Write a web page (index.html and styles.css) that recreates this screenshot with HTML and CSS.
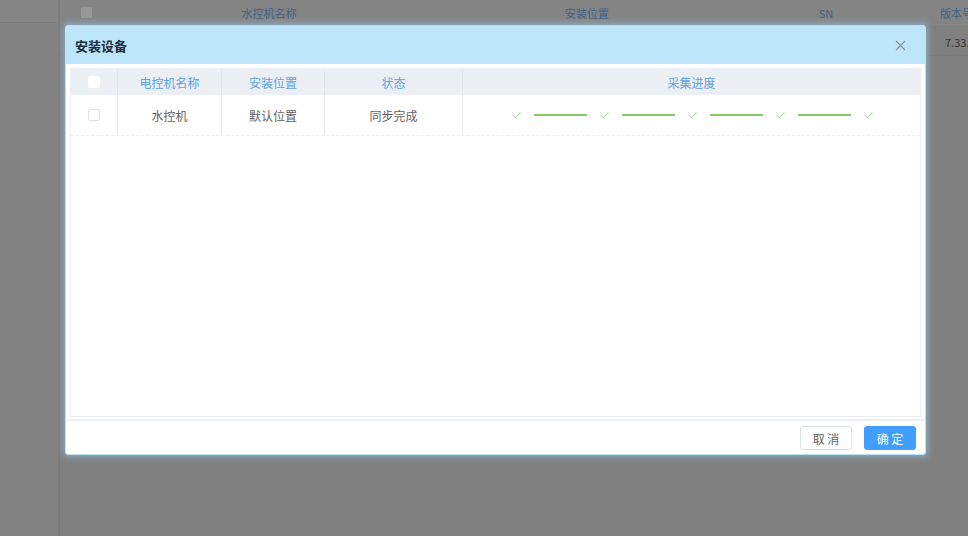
FILE: index.html
```html
<!DOCTYPE html>
<html lang="zh">
<head>
<meta charset="utf-8">
<title>安装设备</title>
<link rel="stylesheet" href="styles.css">
</head>
<body>
<div class="page">
  <aside class="sidebar">
    <div class="side-top"></div>
  </aside>
  <main class="main">
    <div class="bg-grid bg-head">
      <div class="bg-cell"><span class="bg-check"></span></div>
      <div class="bg-cell">水控机名称</div>
      <div class="bg-cell">安装位置</div>
      <div class="bg-cell">SN</div>
      <div class="bg-cell bg-ver">版本号</div>
    </div>
    <div class="bg-grid bg-row">
      <div class="bg-cell"></div>
      <div class="bg-cell"></div>
      <div class="bg-cell"></div>
      <div class="bg-cell"></div>
      <div class="bg-cell bg-ver-val">7.33.0</div>
    </div>
  </main>
</div>

<div class="dialog">
  <div class="dlg-head">
    <span class="dlg-title">安装设备</span>
    <svg class="dlg-close" width="11" height="11" viewBox="0 0 11 11"><path d="M1 1L10 10M10 1L1 10" stroke="#8d9196" stroke-width="1.2" fill="none"/></svg>
  </div>
  <div class="dlg-body">
    <div class="tbl">
      <div class="tgrid thead">
        <div class="tc"><span class="cbox"></span></div>
        <div class="tc">电控机名称</div>
        <div class="tc">安装位置</div>
        <div class="tc">状态</div>
        <div class="tc">采集进度</div>
      </div>
      <div class="tgrid trow">
        <div class="tc"><span class="cbox"></span></div>
        <div class="tc">水控机</div>
        <div class="tc">默认位置</div>
        <div class="tc">同步完成</div>
        <div class="tc">
          <div class="steps">
            <svg class="ck" width="9" height="8" viewBox="0 0 9 8"><path d="M0.5 4L3.3 6.8L8.5 1.2" stroke="#9fd48a" stroke-width="1" fill="none"/></svg>
            <span class="ln"></span>
            <svg class="ck" width="9" height="8" viewBox="0 0 9 8"><path d="M0.5 4L3.3 6.8L8.5 1.2" stroke="#9fd48a" stroke-width="1" fill="none"/></svg>
            <span class="ln"></span>
            <svg class="ck" width="9" height="8" viewBox="0 0 9 8"><path d="M0.5 4L3.3 6.8L8.5 1.2" stroke="#9fd48a" stroke-width="1" fill="none"/></svg>
            <span class="ln"></span>
            <svg class="ck" width="9" height="8" viewBox="0 0 9 8"><path d="M0.5 4L3.3 6.8L8.5 1.2" stroke="#9fd48a" stroke-width="1" fill="none"/></svg>
            <span class="ln"></span>
            <svg class="ck" width="9" height="8" viewBox="0 0 9 8"><path d="M0.5 4L3.3 6.8L8.5 1.2" stroke="#9fd48a" stroke-width="1" fill="none"/></svg>
          </div>
        </div>
      </div>
    </div>
  </div>
  <div class="dlg-foot">
    <button class="btn btn-cancel">取 消</button>
    <button class="btn btn-ok">确 定</button>
  </div>
</div>
</body>
</html>
```

FILE: styles.css
```css
* { box-sizing: border-box; }
html, body {
  margin: 0;
  padding: 0;
  width: 968px;
  height: 536px;
  overflow: hidden;
  background: #808080;
  font-family: "Noto Sans CJK SC", "Liberation Sans", sans-serif;
  font-size: 12px;
}
.page {
  display: flex;
  width: 968px;
  height: 536px;
}
.sidebar {
  width: 60px;
  flex: none;
  background: #828282;
  border-right: 2px solid #7b7b7b;
}
.side-top {
  height: 23px;
  background: #858585;
  border-bottom: 1px solid #7c7c7c;
}
.main {
  flex: 1;
  overflow: hidden;
}
.bg-grid {
  display: grid;
  grid-template-columns: 44px 330px 306px 172px 120px;
  width: 972px;
}
.bg-head {
  height: 25px;
  background: #848484;
  color: #3f6286;
  font-size: 11px;
}
.bg-row {
  height: 31px;
  border-bottom: 1px dashed #7a7a7a;
  color: #363636;
  font-size: 11px;
}
.bg-cell {
  display: flex;
  align-items: center;
  justify-content: center;
  white-space: nowrap;
}
.bg-head .bg-cell:first-child { justify-content: flex-start; padding-left: 21px; }
.bg-check {
  display: block;
  width: 11px;
  height: 11px;
  background: #979797;
  border-radius: 1px;
}
.bg-ver { justify-content: flex-start; padding-left: 28px; }
.bg-ver-val { justify-content: flex-start; padding-left: 33px; padding-top: 3px; }

/* dialog */
.dialog {
  position: absolute;
  left: 65px;
  top: 25px;
  width: 861px;
  height: 430px;
  background: #fff;
  border-radius: 3px;
  border: 1px solid #b9e0f6;
  box-shadow: 0 0 6px 2px rgba(150, 205, 240, 0.55);
  display: flex;
  flex-direction: column;
  overflow: hidden;
}
.dlg-head {
  height: 38px;
  flex: none;
  background: #bee6fb;
  display: flex;
  align-items: center;
  justify-content: space-between;
  padding: 0 19px 0 9px;
}
.dlg-title {
  font-size: 13px;
  font-weight: bold;
  color: #1f2d3d;
}
.dlg-close { display: block; }
.dlg-body {
  flex: 1;
  padding: 4px 4px 2px 4px;
  display: flex;
  flex-direction: column;
}
.tbl {
  flex: 1;
  border: 1px solid #ebeef5;
}
.tgrid {
  display: grid;
  grid-template-columns: 47px 104px 103px 138px 1fr;
}
.thead {
  height: 26px;
  background: #ebeef2;
  color: #5aa3e2;
}
.trow {
  height: 41px;
  color: #606266;
  border-bottom: 1px dashed #ebeef5;
}
.tc {
  display: flex;
  align-items: center;
  justify-content: center;
  border-right: 1px solid #e6e9ee;
}
.thead .tc { border-right-color: #e2e6eb; }
.tc:last-child { border-right: none; }
.cbox {
  display: block;
  width: 12px;
  height: 12px;
  background: #fff;
  border: 1px solid #dcdfe6;
  border-radius: 2px;
}
.thead .cbox { border-color: #fff; }
.steps {
  display: flex;
  align-items: center;
  gap: 13px;
  margin-left: 1px;
}
.ck { display: block; }
.ln {
  display: block;
  width: 53px;
  height: 2px;
  background: #85cc66;
}
.dlg-foot {
  height: 35px;
  flex: none;
  border-top: 2px solid #eeeff1;
  display: flex;
  justify-content: flex-end;
  align-items: flex-start;
  gap: 12px;
  padding: 5px 9px 0 0;
}
.btn {
  height: 24px;
  width: 52px;
  border-radius: 3px;
  font-family: "Noto Sans CJK SC", "Liberation Sans", sans-serif;
  font-size: 12px;
  padding: 0;
  cursor: pointer;
}
.btn-cancel {
  background: #fff;
  border: 1px solid #dcdfe6;
  color: #606266;
}
.btn-ok {
  background: #409eff;
  border: 1px solid #409eff;
  color: #fff;
}
```
